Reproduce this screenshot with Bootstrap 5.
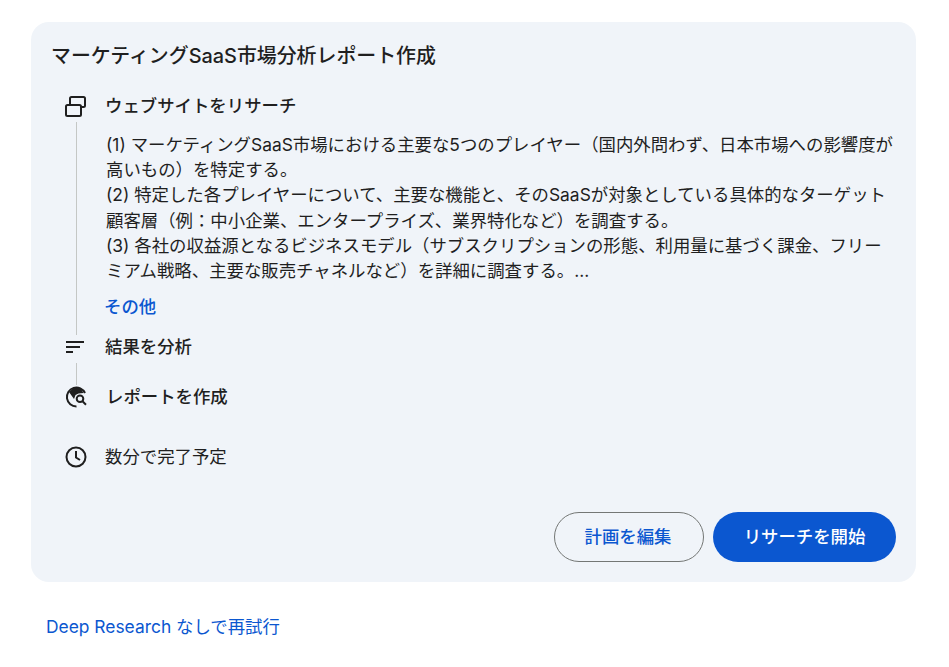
<!DOCTYPE html>
<html lang="ja"><head><meta charset="utf-8">
<link href="https://cdn.jsdelivr.net/npm/bootstrap@5.3.0/dist/css/bootstrap.min.css" rel="stylesheet">
<script src="https://cdn.jsdelivr.net/npm/bootstrap@5.3.0/dist/js/bootstrap.bundle.min.js"></script>
<style>
body{background:#fff;font-family:Inter,"Noto Sans CJK JP",sans-serif;color:#1f1f1f;margin:0}
.pg{padding:22px 33px 0 31px}
.plan{background:#f0f4f9;border-radius:18px;height:560px;padding:20px;display:flex;flex-direction:column}
.ttl{font-size:19.9px;font-weight:500;line-height:28px;margin:0 0 24px}
.stp{display:flex;gap:4px}
.ic{width:50px;flex:none;display:flex;flex-direction:column;align-items:center}
.ic svg{width:24px;height:24px;flex:none}
.ln{width:1px;background:#c4c7c5;flex:1;margin:4px 0 0 1px}
.nm{font-size:17.4px;font-weight:500;line-height:24px}
.nm1{margin-left:1px}
.txt{font-size:17.4px;line-height:25.2px;margin-top:14px;margin-left:1px;width:788px}
.more{color:#0b57d0;font-size:17.4px;font-weight:500;line-height:24px;margin:12px 0 16px -1px}
.s2{height:50px}
.s3{height:60px}
.acts{margin-top:auto;display:flex;justify-content:flex-end;gap:9px}
.b1,.b2{height:50px;border-radius:25px;font-size:17.4px;font-weight:500;display:flex;align-items:center;justify-content:center}
.b1{width:150px;padding:0 2px 0 0;border:1px solid #747775;background:transparent;color:#0b57d0}
.b2{width:183px;padding:0;border:0;background:#0b57d0;color:#fff}
.rt{color:#0b57d0;font-size:17.4px;line-height:24px;margin:33px 0 0 15px;display:inline-block;text-decoration:none}
</style></head><body>
<div class="pg">
<div class="plan">
<div class="ttl">マーケティングSaaS市場分析レポート作成</div>
<div class="stp"><div class="ic"><svg viewBox="0 0 24 24" fill="none" stroke="#1f1f1f" stroke-width="2"><rect x="2" y="11" width="15" height="11" rx="1.5"/><path d="M6 11V4.500A1.500 1.500 0 0 1 7.500 3h12A1.500 1.500 0 0 1 21 4.500v7a1.500 1.500 0 0 1-1.500 1.500H17"/></svg><div class="ln"></div></div>
<div><div class="nm">ウェブサイトをリサーチ</div>
<div class="txt">(1) マーケティングSaaS市場における主要な5つのプレイヤー（国内外問わず、日本市場への影響度が高いもの）を特定する。<br>(2) 特定した各プレイヤーについて、主要な機能と、そのSaaSが対象としている具体的なターゲット顧客層（例：中小企業、エンタープライズ、業界特化など）を調査する。<br>(3) 各社の収益源となるビジネスモデル（サブスクリプションの形態、利用量に基づく課金、フリーミアム戦略、主要な販売チャネルなど）を詳細に調査する。...</div>
<div class="more">その他</div></div></div>
<div class="stp s2"><div class="ic"><svg viewBox="0 0 24 24" fill="none" stroke="#1f1f1f" stroke-width="2"><path d="M2 7h18M2 12h14M2 17h7"/></svg><div class="ln"></div></div><div class="nm">結果を分析</div></div>
<div class="stp s3"><div class="ic"><svg viewBox="0 0 24 24"><path d="M12.500 21.500A9.500 9.500 0 1 1 21 8" fill="none" stroke="#1f1f1f" stroke-width="2"/><path d="M5 7L10 14 11.500 10 14.500 8.500 19.500 8 16.500 3 10 2.500z" fill="#1f1f1f"/><circle cx="16" cy="13.700" r="3.300" fill="none" stroke="#1f1f1f" stroke-width="2"/><path d="M18.500 16.200l3.500 3.500" stroke="#1f1f1f" stroke-width="2"/></svg></div><div class="nm nm1">レポートを作成</div></div>
<div class="stp"><div class="ic"><svg viewBox="0 0 24 24" fill="none" stroke="#1f1f1f" stroke-width="2"><circle cx="12" cy="12" r="9.500"/><path d="M12 6v6.500l4 2.500"/></svg></div><div class="nm fw-normal">数分で完了予定</div></div>
<div class="acts"><button class="b1">計画を編集</button><button class="b2">リサーチを開始</button></div>
</div>
<a class="rt" href="#">Deep Research なしで再試行</a>
</div>
</body></html>
